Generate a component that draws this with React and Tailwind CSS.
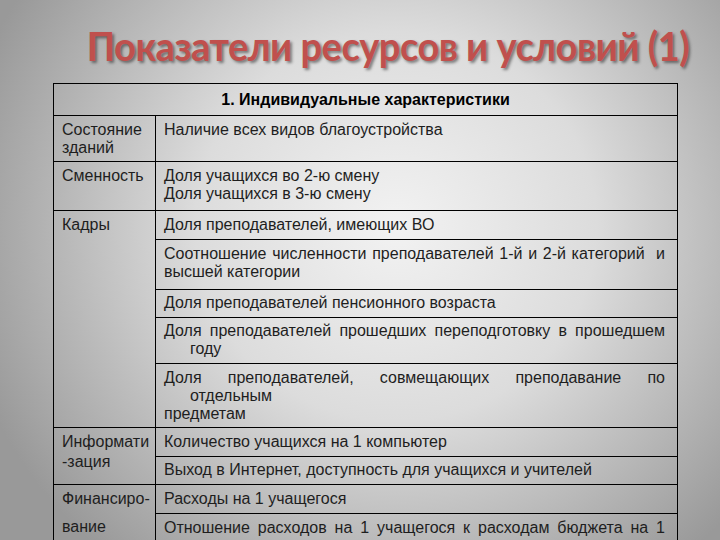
const cellL = 'border border-black align-top px-2 text-left';
const cellR = 'border border-black align-top px-2 text-left';

function Just({ children, indent }) {
  return (
    <div className={`text-justify [text-align-last:justify] ${indent ? 'pl-[26px]' : ''}`}>{children}</div>
  );
}

export default function App() {
  return (
    <div className="w-[720px] h-[540px] overflow-hidden bg-[radial-gradient(ellipse_62%_80%_at_55%_42%,#f2f2f2_0%,#dcdcdc_45%,#999999_100%)] font-['Liberation_Sans',Arial,sans-serif]">
      <div className="pt-[22px] pl-[56px] text-center">
        <h1 className="font-['Lato','Open_Sans',sans-serif] text-[40px] leading-[48px] font-bold text-[#c0504d] tracking-[-0.5px] [text-shadow:2px_2px_3px_rgba(0,0,0,0.45)] origin-center scale-x-[0.95]">
          Показатели ресурсов и условий (1)
        </h1>
      </div>

      <div className="pl-[53px] pt-[13px]">
        <table className="w-[625px] table-fixed border-collapse font-['Liberation_Sans',Arial,sans-serif] text-[16px] leading-[18px] text-[#1e1e1e]">
          <colgroup>
            <col className="w-[102px]" />
            <col />
          </colgroup>
          <tbody>
            <tr className="h-[32px]">
              <td colSpan={2} className="border border-black text-center align-middle font-bold text-[16px] text-black">
                1. Индивидуальные характеристики
              </td>
            </tr>
            <tr className="h-[46px]">
              <td className={`${cellL} pt-[5px]`}>Состояние<br />зданий</td>
              <td className={`${cellR} pt-[5px]`}>Наличие всех видов благоустройства</td>
            </tr>
            <tr className="h-[49px]">
              <td className={`${cellL} pt-[5px]`}>Сменность</td>
              <td className={`${cellR} pt-[5px]`}>Доля учащихся во 2-ю смену<br />Доля учащихся в 3-ю смену</td>
            </tr>
            <tr className="h-[29px]">
              <td rowSpan={5} className={`${cellL} pt-[5px]`}>Кадры</td>
              <td className={`${cellR} pt-[5px]`}>Доля преподавателей, имеющих ВО</td>
            </tr>
            <tr className="h-[50px]">
              <td className={`${cellR} pt-[5px] pr-[12px]`}>
                <Just>Соотношение численности преподавателей 1-й и 2-й категорий&nbsp; и</Just>
                <div>высшей категории</div>
              </td>
            </tr>
            <tr className="h-[28px]">
              <td className={`${cellR} pt-[4px]`}>Доля преподавателей пенсионного возраста</td>
            </tr>
            <tr className="h-[46px]">
              <td className={`${cellR} pt-[4px] pr-[12px]`}>
                <Just>Доля преподавателей прошедших переподготовку в прошедшем</Just>
                <div className="pl-[26px]">году</div>
              </td>
            </tr>
            <tr className="h-[64px]">
              <td className={`${cellR} pt-[5px] pr-[12px]`}>
                <Just>Доля преподавателей, совмещающих преподавание по</Just>
                <div className="pl-[26px]">отдельным</div>
                <div>предметам</div>
              </td>
            </tr>
            <tr className="h-[29px]">
              <td rowSpan={2} className={`${cellL} pt-[4px] leading-[20px]`}>Информати<br />-зация</td>
              <td className={`${cellR} pt-[5px]`}>Количество учащихся на 1 компьютер</td>
            </tr>
            <tr className="h-[28px]">
              <td className={`${cellR} pt-[4px]`}>Выход в Интернет, доступность для учащихся и учителей</td>
            </tr>
            <tr className="h-[29px]">
              <td rowSpan={2} className={`${cellL} pt-[5px]`}>
                <div>Финансиро-</div>
                <div className="pt-[10px]">вание</div>
              </td>
              <td className={`${cellR} pt-[5px]`}>Расходы на 1 учащегося</td>
            </tr>
            <tr className="h-[40px]">
              <td className={`${cellR} pt-[5px] pr-[12px]`}>
                <Just>Отношение расходов на 1 учащегося к расходам бюджета на 1</Just>
              </td>
            </tr>
          </tbody>
        </table>
      </div>
    </div>
  );
}
